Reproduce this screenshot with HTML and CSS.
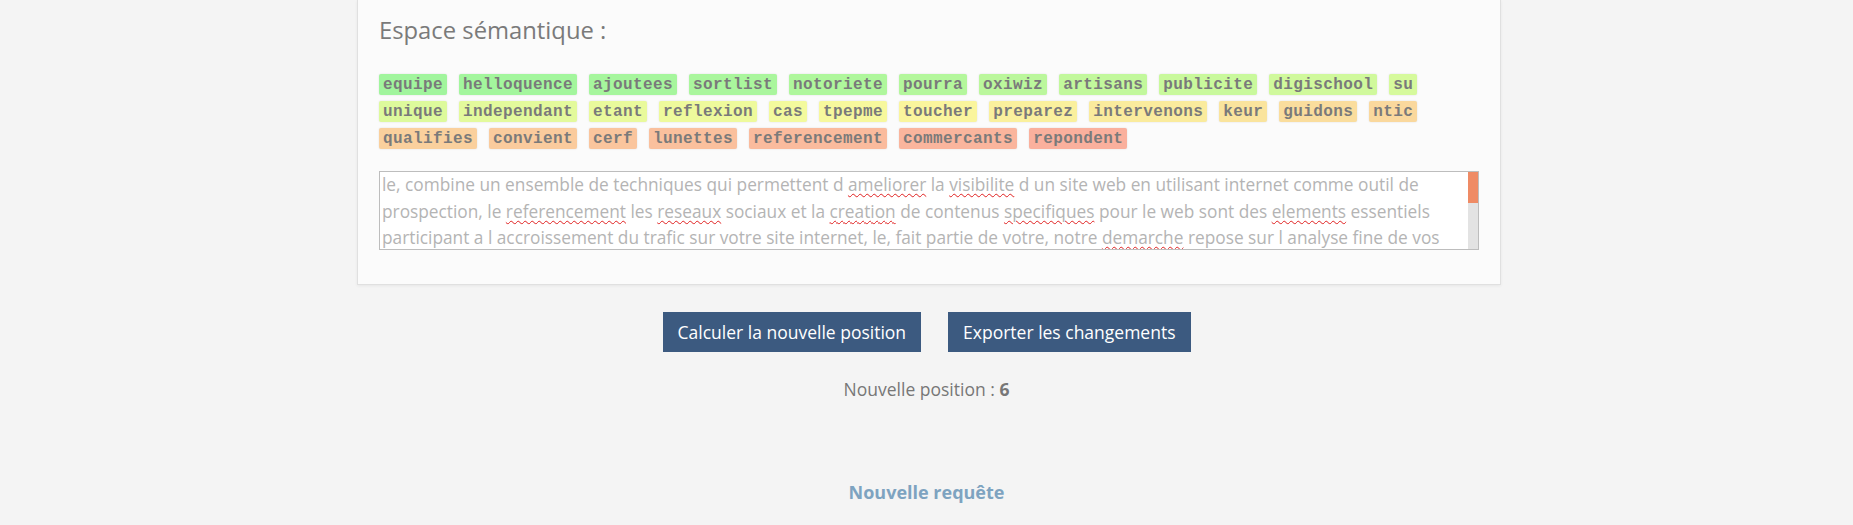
FILE: index.html
```html
<!DOCTYPE html>
<html lang="fr">
<head>
<meta charset="utf-8">
<title>Espace sémantique</title>
<link rel="stylesheet" href="styles.css">
</head>
<body>
<div class="container">
  <section class="card">
    <h2 class="card-title">Espace sémantique :</h2>
    <div class="tags">
      <span class="tag" style="background:#a1f59d">equipe</span>
      <span class="tag" style="background:#a3f69d">helloquence</span>
      <span class="tag" style="background:#a6f69d">ajoutees</span>
      <span class="tag" style="background:#aaf69d">sortlist</span>
      <span class="tag" style="background:#aff79c">notoriete</span>
      <span class="tag" style="background:#b4f79c">pourra</span>
      <span class="tag" style="background:#bbf79c">oxiwiz</span>
      <span class="tag" style="background:#c2f89c">artisans</span>
      <span class="tag" style="background:#c9f99c">publicite</span>
      <span class="tag" style="background:#d0f99c">digischool</span>
      <span class="tag" style="background:#d6fa9c">su</span>
      <span class="tag" style="background:#ddfa9c">unique</span>
      <span class="tag" style="background:#e3fa9c">independant</span>
      <span class="tag" style="background:#e9fa9c">etant</span>
      <span class="tag" style="background:#eefa9c">reflexion</span>
      <span class="tag" style="background:#f3fa9d">cas</span>
      <span class="tag" style="background:#f7f89d">tpepme</span>
      <span class="tag" style="background:#faf59d">toucher</span>
      <span class="tag" style="background:#faf09d">preparez</span>
      <span class="tag" style="background:#faeb9d">intervenons</span>
      <span class="tag" style="background:#fae49d">keur</span>
      <span class="tag" style="background:#fadd9d">guidons</span>
      <span class="tag" style="background:#fad89d">ntic</span>
      <span class="tag" style="background:#fad09d">qualifies</span>
      <span class="tag" style="background:#facb9d">convient</span>
      <span class="tag" style="background:#fac59d">cerf</span>
      <span class="tag" style="background:#fac09d">lunettes</span>
      <span class="tag" style="background:#fabb9d">referencement</span>
      <span class="tag" style="background:#fab59d">commercants</span>
      <span class="tag" style="background:#fab09d">repondent</span>
    </div>
    <div class="textbox">
      <div class="textbox-text">le, combine un ensemble de techniques qui permettent d <span class="misspelled">ameliorer</span> la <span class="misspelled">visibilite</span> d un site web en utilisant internet comme outil de prospection, le <span class="misspelled">referencement</span> les <span class="misspelled">reseaux</span> sociaux et la <span class="misspelled">creation</span> de contenus <span class="misspelled">specifiques</span> pour le web sont des <span class="misspelled">elements</span> essentiels participant a l accroissement du trafic sur votre site internet, le, fait partie de votre, notre <span class="misspelled">demarche</span> repose sur l analyse fine de vos</div>
      <div class="scrollbar"><div class="scrollbar-thumb"></div></div>
    </div>
  </section>
</div>

<div class="actions">
  <div class="buttons">
    <button class="btn">Calculer la nouvelle position</button>
    <button class="btn">Exporter les changements</button>
  </div>
  <p class="position">Nouvelle position : <strong>6</strong></p>
</div>
<p class="footer"><a class="new-query" href="#">Nouvelle requête</a></p>
</body>
</html>
```

FILE: styles.css
```css
html, body {
  margin: 0;
  padding: 0;
}

body {
  background: #f4f4f4;
  font-family: "Open Sans", Lato, sans-serif;
  color: #777;
  font-size: 17.5px;
}

.container {
  width: 1149px;
  margin: 0 auto;
  padding-left: 5px;
  box-sizing: border-box;
}

.card {
  background: #fbfbfb;
  border: 1px solid #e0e0e0;
  border-top: 0;
  box-shadow: 0 1px 3px rgba(0, 0, 0, 0.06);
  padding: 17px 21px 34px 21px;
}

.card-title {
  margin: 0 0 31px 0;
  font-size: 23.8px;
  line-height: 26px;
  font-weight: 400;
  color: #7a7a7a;
}

.tags {
  display: flex;
  flex-wrap: wrap;
  gap: 6px 12px;
  margin-bottom: 22px;
}

.tag {
  font-family: "Liberation Mono", "DejaVu Sans Mono", monospace;
  font-weight: 700;
  font-size: 16px;
  letter-spacing: 0.4px;
  line-height: 22px;
  height: 21px;
  padding: 0 4px;
  border-radius: 2px;
  color: #7a7a7a;
  box-shadow: 0 0 2px rgba(0, 0, 0, 0.12);
}

.textbox {
  display: flex;
  height: 79px;
  box-sizing: border-box;
  border: 1px solid #bdbdbd;
  background: #fff;
}

.textbox-text {
  flex: 1;
  overflow: hidden;
  padding: 0 2px;
  font-size: 17.3px;
  line-height: 26.5px;
  color: #b4b4b4;
}

.misspelled {
  text-decoration: underline wavy #e02020;
  text-decoration-thickness: 1px;
  text-underline-offset: 2px;
}

.scrollbar {
  width: 10px;
  background: #e3e3e3;
}

.scrollbar-thumb {
  height: 31px;
  background: #ef8b65;
}

.actions {
  text-align: center;
}

.buttons {
  display: flex;
  justify-content: center;
  gap: 27px;
  margin-top: 27px;
}

.btn {
  font-family: "Open Sans", Lato, sans-serif;
  font-size: 17.5px;
  height: 40px;
  padding: 0 15px;
  border: 0;
  border-radius: 0;
  background: #3c5a80;
  color: #fff;
}

.position {
  margin: 25px 0 0 0;
  line-height: 24px;
  color: #777;
}

.position strong {
  font-weight: 700;
}

.footer {
  margin: 79px 0 0 0;
  text-align: center;
  line-height: 24px;
}

.new-query {
  font-size: 18px;
  font-weight: 700;
  color: #7ea3c0;
  text-decoration: none;
}
```
